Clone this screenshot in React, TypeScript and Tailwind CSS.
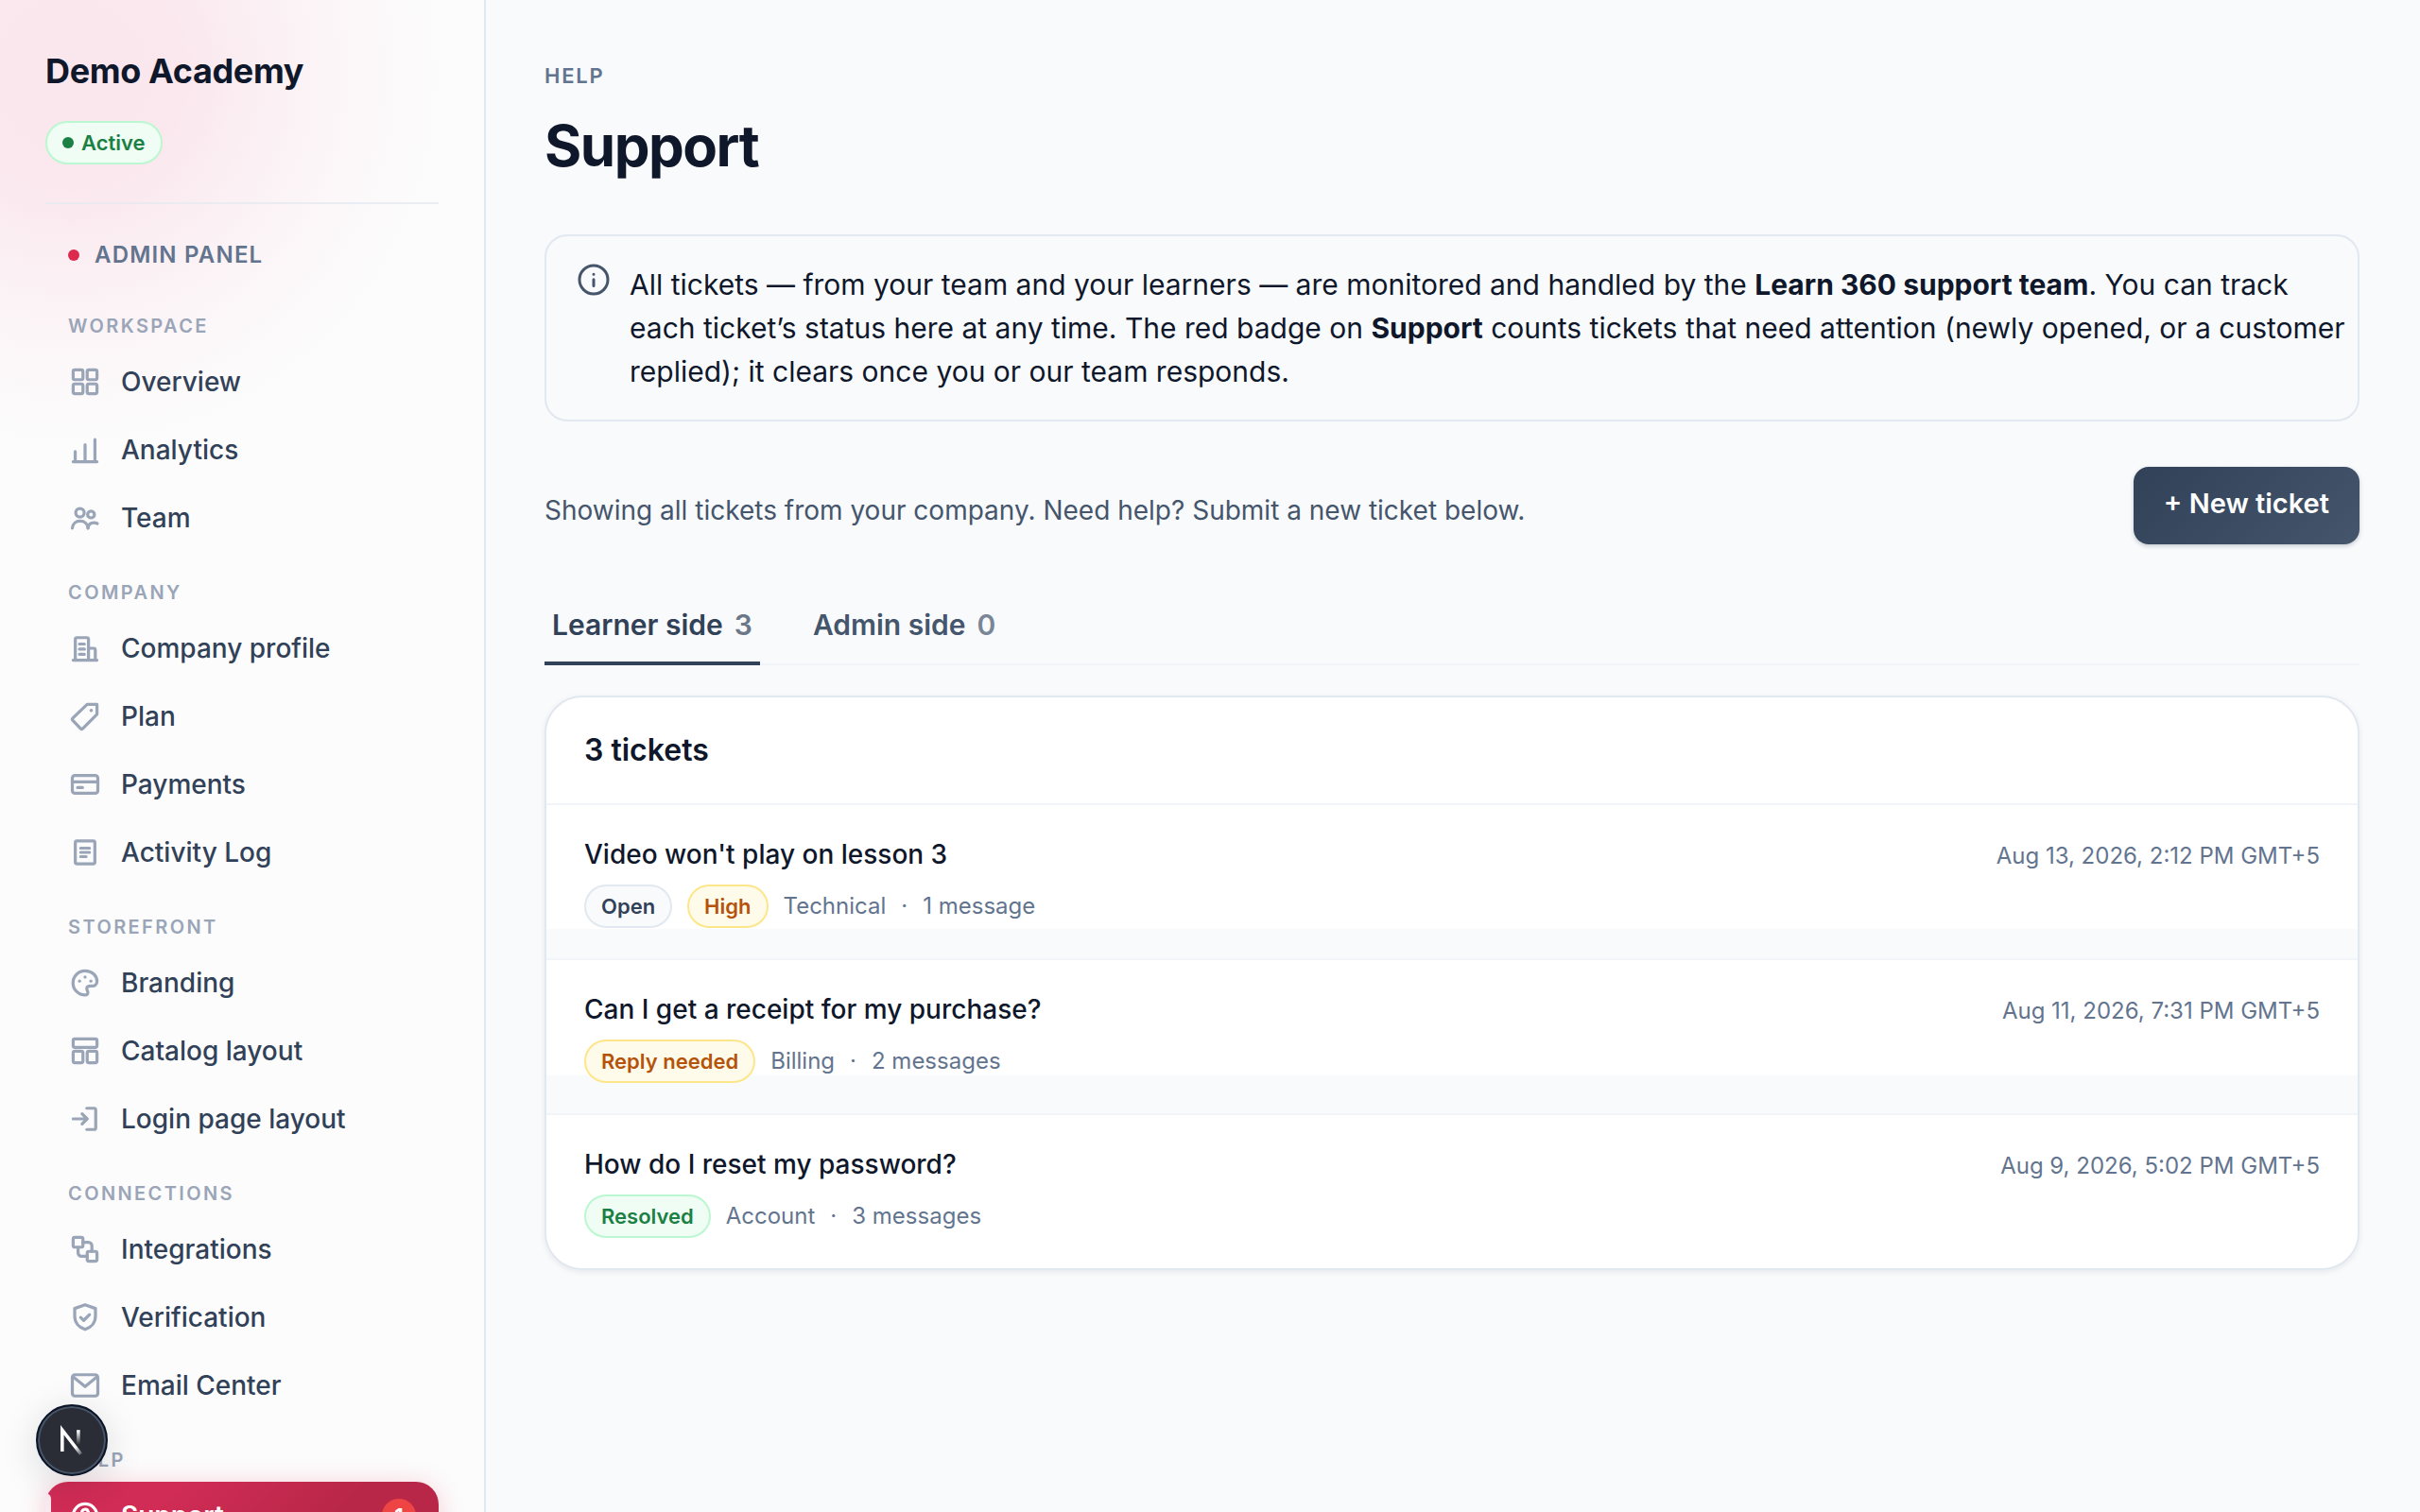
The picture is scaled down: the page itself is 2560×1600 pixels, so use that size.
/**
 * Support page of the academy admin panel
 */

import React, { useState } from 'react';
import clsx from 'clsx';

interface NavItem {
  label: string;
  icon: React.ReactNode;
  badge?: number;
}

interface NavGroup {
  title: string;
  items: NavItem[];
}

type Tone = 'neutral' | 'warning' | 'success';

interface Ticket {
  title: string;
  date: string;
  pills: { label: string; tone: Tone }[];
  category: string;
  messages: string;
  rowClass: string;
}

const icons = {
  overview: (
    <>
      <rect x="3" y="3" width="5.75" height="5.75" rx="1" />
      <rect x="11.25" y="3" width="5.75" height="5.75" rx="1" />
      <rect x="3" y="11.25" width="5.75" height="5.75" rx="1" />
      <rect x="11.25" y="11.25" width="5.75" height="5.75" rx="1" />
    </>
  ),
  analytics: <path d="M3 17h14M4.2 17v-6M10 17V7M15.8 17V4" />,
  team: (
    <>
      <circle cx="7" cy="7" r="2.5" />
      <circle cx="13.5" cy="8" r="2" />
      <path d="M2.5 16c.2-2.4 2.1-4.1 4.6-4.1s4.4 1.7 4.6 4.1" />
      <path d="M11.7 16c.3-2 1.7-3.1 3.5-3.1.7 0 1.4.1 2 .4" />
    </>
  ),
  company: (
    <>
      <path d="M3 17h14M4.25 17V4.75a1 1 0 0 1 1-1h5.75a1 1 0 0 1 1 1V17M12 10h3a1 1 0 0 1 1 1v6" />
      <path d="M6.7 7.5h2.9M6.7 10.5h2.9M6.7 13.5h2.9" />
    </>
  ),
  plan: (
    <>
      <path d="M11.2 3H17v5.8l-8.3 8.4a1 1 0 0 1-1.4 0l-4.5-4.8a1 1 0 0 1 0-1.4z" />
      <circle cx="13.6" cy="6.5" r="1" fill="currentColor" stroke="none" />
    </>
  ),
  payments: (
    <>
      <rect x="2.5" y="4.75" width="15" height="10.5" rx="1.5" />
      <path d="M2.5 8.5h15M5.6 11.9h2.9" />
    </>
  ),
  activity: (
    <>
      <rect x="4.25" y="3.25" width="11.5" height="13.5" rx="1" />
      <path d="M7.4 7.5h5.2M7.4 10h5.2M7.4 12.5h3.2" />
    </>
  ),
  branding: (
    <>
      <path d="M10 3a7.05 7.05 0 1 0 0 14.2c1.3 0 1.9-.8 1.6-1.8-.3-1.1-.9-1.8-.5-2.6.3-.8 1.1-.9 2.1-.9h.9c1.7 0 2.9-1.2 2.9-2.8C17 5.6 13.9 3 10 3z" />
      <circle cx="6.75" cy="9" r=".9" fill="currentColor" stroke="none" />
      <circle cx="10" cy="6.6" r=".9" fill="currentColor" stroke="none" />
      <circle cx="13.4" cy="9" r=".9" fill="currentColor" stroke="none" />
    </>
  ),
  catalog: (
    <>
      <rect x="3" y="3" width="14" height="5" rx="1" />
      <rect x="3" y="10.25" width="5.75" height="6.75" rx="1" />
      <rect x="11.25" y="10.25" width="5.75" height="6.75" rx="1" />
    </>
  ),
  login: (
    <path d="M11 3.75h4.25a1 1 0 0 1 1 1v10.5a1 1 0 0 1-1 1H11M3 10h8.1M8.25 7l3 3-3 3" />
  ),
  integrations: (
    <>
      <rect x="3" y="3" width="5.75" height="5.75" rx="1" />
      <rect x="11.25" y="11.25" width="5.75" height="5.75" rx="1" />
      <path d="M8.75 5.9H12a2 2 0 0 1 2 2v3.35M5.9 8.75v3.35a2 2 0 0 0 2 2h3.35" />
    </>
  ),
  verification: (
    <>
      <path d="M10 2.6l6.1 2.2v4.5c0 3.7-2.4 6.6-6.1 7.8-3.7-1.2-6.1-4.1-6.1-7.8V4.8z" />
      <path d="M7.4 10.1l1.8 1.7 3.4-3.4" />
    </>
  ),
  email: (
    <>
      <rect x="2.5" y="3.75" width="15" height="12.5" rx="1.5" />
      <path d="M3 5l7 5.7L17 5" />
    </>
  ),
  support: (
    <>
      <circle cx="10" cy="10" r="7" />
      <path d="M8.1 8.1a1.9 1.9 0 1 1 2.8 1.7c-.6.3-.9.7-.9 1.4" />
      <circle cx="10" cy="13.6" r=".9" fill="currentColor" stroke="none" />
    </>
  ),
};

const navGroups: NavGroup[] = [
  {
    title: 'Workspace',
    items: [
      { label: 'Overview', icon: icons.overview },
      { label: 'Analytics', icon: icons.analytics },
      { label: 'Team', icon: icons.team },
    ],
  },
  {
    title: 'Company',
    items: [
      { label: 'Company profile', icon: icons.company },
      { label: 'Plan', icon: icons.plan },
      { label: 'Payments', icon: icons.payments },
      { label: 'Activity Log', icon: icons.activity },
    ],
  },
  {
    title: 'Storefront',
    items: [
      { label: 'Branding', icon: icons.branding },
      { label: 'Catalog layout', icon: icons.catalog },
      { label: 'Login page layout', icon: icons.login },
    ],
  },
  {
    title: 'Connections',
    items: [
      { label: 'Integrations', icon: icons.integrations },
      { label: 'Verification', icon: icons.verification },
      { label: 'Email Center', icon: icons.email },
    ],
  },
  {
    title: 'Help',
    items: [{ label: 'Support', icon: icons.support, badge: 1 }],
  },
];

const tickets: Ticket[] = [
  {
    title: "Video won't play on lesson 3",
    date: 'Aug 13, 2026, 2:12 PM GMT+5',
    pills: [
      { label: 'Open', tone: 'neutral' },
      { label: 'High', tone: 'warning' },
    ],
    category: 'Technical',
    messages: '1 message',
    rowClass: 'bg-[linear-gradient(to_top,#f8fafc_31px,#ffffff_31px)]',
  },
  {
    title: 'Can I get a receipt for my purchase?',
    date: 'Aug 11, 2026, 7:31 PM GMT+5',
    pills: [{ label: 'Reply needed', tone: 'warning' }],
    category: 'Billing',
    messages: '2 messages',
    rowClass: 'bg-[linear-gradient(to_top,#f8fafc_40px,#ffffff_40px)]',
  },
  {
    title: 'How do I reset my password?',
    date: 'Aug 9, 2026, 5:02 PM GMT+5',
    pills: [{ label: 'Resolved', tone: 'success' }],
    category: 'Account',
    messages: '3 messages',
    rowClass: 'bg-white',
  },
];

const toneClasses: Record<Tone, string> = {
  neutral: 'border-slate-200 bg-slate-50 text-slate-700',
  warning: 'border-[#fde68a] bg-[#fffbeb] text-[#b45309]',
  success: 'border-[#bbf7d0] bg-[#f0fdf4] text-[#1a8043]',
};

function Pill({ tone, children }: { tone: Tone; children: React.ReactNode }) {
  return (
    <span
      className={clsx(
        'inline-flex items-center gap-2 rounded-full border-2 px-4 py-1 text-[22px] leading-[34px] font-semibold',
        toneClasses[tone],
      )}
    >
      {children}
    </span>
  );
}

function NavLink({ item, active }: { item: NavItem; active: boolean }) {
  return (
    <a
      href="#"
      aria-current={active ? 'page' : undefined}
      className={clsx(
        'relative flex h-[72px] items-center gap-5 px-6 text-[28px]',
        active
          ? 'rounded-3xl bg-linear-[135deg] from-[#d02c55] from-30% to-[#b92748] to-70% font-semibold text-white shadow-[0_4px_28px_rgba(225,29,72,0.22)]'
          : 'font-medium text-slate-700',
      )}
    >
      {active && <span className="absolute inset-y-3 left-0 w-[6px] rounded-r-md bg-[#fae9ee]" />}
      <svg
        viewBox="0 0 20 20"
        fill="none"
        stroke="currentColor"
        strokeWidth="1.8"
        strokeLinecap="round"
        strokeLinejoin="round"
        aria-hidden="true"
        className={clsx('size-9 shrink-0', active ? 'text-white' : 'text-[#9aa5b8]')}
      >
        {item.icon}
      </svg>
      <span className="flex-1">{item.label}</span>
      {item.badge && (
        <span className="flex size-9 items-center justify-center rounded-full bg-[#ef4444] text-[22px] font-bold text-white">
          {item.badge}
        </span>
      )}
    </a>
  );
}

function Sidebar() {
  return (
    <aside className="sticky top-0 z-10 h-screen w-[512px] shrink-0 overflow-hidden bg-[#fcfcfc] bg-[radial-gradient(circle_at_76px_80px,#fae7ed_0px,#fae8ee_120px,#fbf0f4_210px,#fcf7f9_300px,#fcfcfc_395px)] px-12 pt-12 shadow-[2px_0_0_#e2e8f0]">
      <div className="border-b-2 border-slate-200/70 pb-10">
        <div className="text-[36px] leading-[54px] font-bold tracking-[-0.01em] text-slate-900">Demo Academy</div>
        <div className="mt-[26px] flex">
          <Pill tone="success">
            <span className="size-3 rounded-full bg-[#1a8043]" />
            Active
          </Pill>
        </div>
      </div>

      <div className="mt-9 mb-[14px] flex items-center gap-4 px-6 text-[24px] leading-[36px] font-semibold tracking-wider text-slate-500 uppercase">
        <span className="size-3 rounded-full bg-[#dc2a4f]" />
        Admin panel
      </div>

      <nav aria-label="Admin panel">
        {navGroups.map((group) => (
          <div key={group.title}>
            <div className="px-6 pt-[29px] pb-[9px] text-[20px] leading-[28px] font-semibold tracking-[0.12em] text-[#9aa5b8] uppercase">
              {group.title}
            </div>
            {group.items.map((item) => (
              <NavLink key={item.label} item={item} active={item.label === 'Support'} />
            ))}
          </div>
        ))}
      </nav>
    </aside>
  );
}

function InfoNotice() {
  return (
    <div className="flex items-start gap-5 rounded-3xl border-2 border-slate-200 py-7 pr-2 pl-8">
      <svg
        viewBox="0 0 24 24"
        fill="none"
        stroke="currentColor"
        strokeWidth="2"
        strokeLinecap="round"
        aria-hidden="true"
        className="size-9 shrink-0 text-slate-600"
      >
        <circle cx="12" cy="12" r="10" />
        <path d="M12 11.8v4.6M12 8.1v.1" />
      </svg>
      <p className="text-[30px] leading-[46px] text-slate-900">
        All tickets — from your team and your learners — are monitored and handled by the{' '}
        <strong className="font-bold">Learn 360 support team</strong>. You can track each ticket’s status here at any
        time. The red badge on <strong className="font-bold">Support</strong> counts tickets that need attention (newly
        opened, or a customer replied); it clears once you or our team responds.
      </p>
    </div>
  );
}

function TicketRow({ ticket }: { ticket: Ticket }) {
  return (
    <li className="border-b-2 border-slate-100 last:border-b-0">
      <a href="#" className={clsx('flex items-start justify-between gap-8 px-10 py-8', ticket.rowClass)}>
        <div className="flex flex-col gap-3">
          <h3 className="text-[28px] leading-[40px] font-medium text-slate-900">{ticket.title}</h3>
          <div className="flex items-center gap-4 text-[24px] leading-[36px] text-slate-500">
            {ticket.pills.map((pill) => (
              <Pill key={pill.label} tone={pill.tone}>
                {pill.label}
              </Pill>
            ))}
            <span>{ticket.category}</span>
            <span>·</span>
            <span>{ticket.messages}</span>
          </div>
        </div>
        <time className="text-[24px] leading-[44px] text-slate-500">{ticket.date}</time>
      </a>
    </li>
  );
}

function DevToolsButton() {
  return (
    <button
      type="button"
      aria-label="Open developer tools"
      className="fixed bottom-[38px] left-[38px] z-20 size-[76px] rounded-full border-2 border-[#0b1426] bg-[#2b2d36] shadow-[inset_0_0_0_2px_#475569,0_8px_40px_rgba(15,23,42,0.14)]"
    >
      <svg viewBox="0 0 40 40" fill="none" strokeWidth="2" className="size-[72px]">
        <defs>
          <linearGradient id="diagonal" x1="9.96" y1="11.12" x2="15.48" y2="17.97" gradientUnits="userSpaceOnUse">
            <stop stopColor="white" />
            <stop offset="0.8" stopColor="white" stopOpacity="0" />
          </linearGradient>
          <linearGradient id="stem" x1="11.82" y1="1.4" x2="11.79" y2="9.63" gradientUnits="userSpaceOnUse">
            <stop stopColor="white" />
            <stop offset="1" stopColor="white" stopOpacity="0" />
          </linearGradient>
        </defs>
        <g transform="translate(12 13)">
          <path d="M13.3 15.2L2.34 1v12.6" stroke="url(#diagonal)" />
          <path d="M11.825 1v12" stroke="url(#stem)" />
        </g>
      </svg>
    </button>
  );
}

export default function App() {
  const [tab, setTab] = useState('Learner side');
  const tabs = [
    { label: 'Learner side', count: 3 },
    { label: 'Admin side', count: 0 },
  ];

  return (
    <div className="flex min-h-screen bg-slate-50 font-[Inter,sans-serif]">
      <Sidebar />

      <main className="min-w-0 flex-1 px-16 pt-16">
        <div className="text-[22px] leading-[32px] font-semibold tracking-[0.08em] text-slate-500 uppercase">Help</div>
        <h1 className="mt-6 mb-15 text-[60px] leading-[68px] font-bold tracking-tight text-slate-900">Support</h1>

        <InfoNotice />

        <div className="mt-12 flex items-end justify-between gap-8">
          <p className="pb-[14px] text-[28px] leading-[44px] text-slate-600">
            Showing all tickets from your company. Need help? Submit a new ticket below.
          </p>
          <button
            type="button"
            className="rounded-2xl bg-linear-[135deg] from-slate-700 to-slate-600 px-8 pt-4 pb-5 text-[29px] leading-[46px] font-semibold text-white shadow-[0_2px_4px_rgba(51,65,85,0.25)]"
          >
            + New ticket
          </button>
        </div>

        <div role="tablist" className="mt-[62px] flex gap-12 border-b-2 border-slate-100">
          {tabs.map(({ label, count }) => (
            <button
              key={label}
              type="button"
              role="tab"
              aria-selected={tab === label}
              onClick={() => setTab(label)}
              className={clsx(
                '-mb-[2px] flex gap-3 border-b-4 px-2 pb-4 text-[30px] leading-[46px] font-semibold',
                tab === label ? 'border-slate-700 text-slate-700' : 'border-transparent text-slate-600',
              )}
            >
              {label}
              <span className="opacity-70">{count}</span>
            </button>
          ))}
        </div>

        <section className="mt-8 overflow-hidden rounded-[40px] border-2 border-slate-200 bg-white shadow-[0_2px_6px_rgba(15,23,42,0.08)]">
          <h2 className="border-b-2 border-slate-100 px-10 py-8 text-[32px] leading-[48px] font-semibold text-slate-900">
            3 tickets
          </h2>
          <ul>
            {tickets.map((ticket) => (
              <TicketRow key={ticket.title} ticket={ticket} />
            ))}
          </ul>
        </section>
      </main>

      <DevToolsButton />
    </div>
  );
}
